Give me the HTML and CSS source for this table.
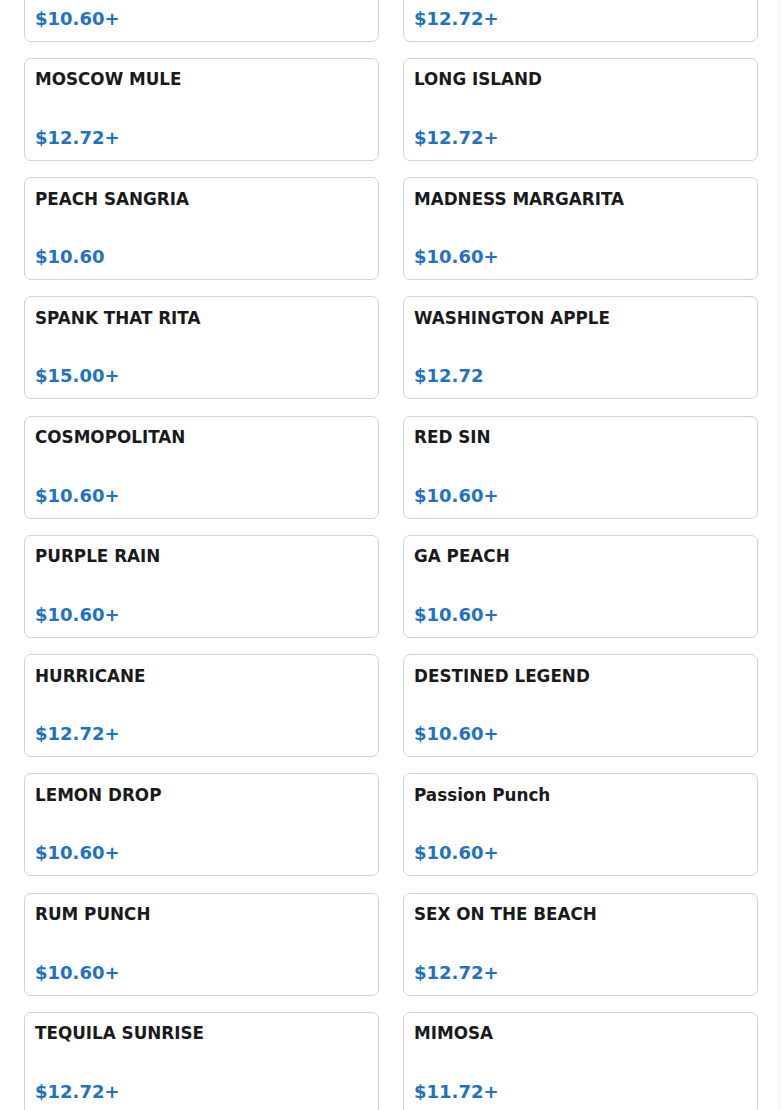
FILE: index.html
```html
<!DOCTYPE html>
<html lang="en">
<head>
<meta charset="utf-8">
<title>Drinks</title>
<link rel="stylesheet" href="styles.css">
</head>
<body>
<div class="page">
  <main class="main">
    <div class="grid">
      <div class="card"><h3 class="name">MARGARITA</h3><div class="price">$10.60+</div></div>
      <div class="card"><h3 class="name">PINA COLADA</h3><div class="price">$12.72+</div></div>
      <div class="card"><h3 class="name">MOSCOW MULE</h3><div class="price">$12.72+</div></div>
      <div class="card"><h3 class="name">LONG ISLAND</h3><div class="price">$12.72+</div></div>
      <div class="card"><h3 class="name">PEACH SANGRIA</h3><div class="price">$10.60</div></div>
      <div class="card"><h3 class="name">MADNESS MARGARITA</h3><div class="price">$10.60+</div></div>
      <div class="card"><h3 class="name">SPANK THAT RITA</h3><div class="price">$15.00+</div></div>
      <div class="card"><h3 class="name">WASHINGTON APPLE</h3><div class="price">$12.72</div></div>
      <div class="card"><h3 class="name">COSMOPOLITAN</h3><div class="price">$10.60+</div></div>
      <div class="card"><h3 class="name">RED SIN</h3><div class="price">$10.60+</div></div>
      <div class="card"><h3 class="name">PURPLE RAIN</h3><div class="price">$10.60+</div></div>
      <div class="card"><h3 class="name">GA PEACH</h3><div class="price">$10.60+</div></div>
      <div class="card"><h3 class="name">HURRICANE</h3><div class="price">$12.72+</div></div>
      <div class="card"><h3 class="name">DESTINED LEGEND</h3><div class="price">$10.60+</div></div>
      <div class="card"><h3 class="name">LEMON DROP</h3><div class="price">$10.60+</div></div>
      <div class="card"><h3 class="name">Passion Punch</h3><div class="price">$10.60+</div></div>
      <div class="card"><h3 class="name">RUM PUNCH</h3><div class="price">$10.60+</div></div>
      <div class="card"><h3 class="name">SEX ON THE BEACH</h3><div class="price">$12.72+</div></div>
      <div class="card"><h3 class="name">TEQUILA SUNRISE</h3><div class="price">$12.72+</div></div>
      <div class="card"><h3 class="name">MIMOSA</h3><div class="price">$11.72+</div></div>
    </div>
  </main>
  <div class="edge"></div>
</div>
</body>
</html>
```
FILE: styles.css
```css
html, body {
  margin: 0;
  padding: 0;
  background: #ffffff;
}
body {
  font-family: "DejaVu Sans", "Liberation Sans", sans-serif;
  color: #1a1a1d;
  overflow: hidden;
  height: 1110px;
}
.page {
  display: flex;
  min-height: 1110px;
}
.main {
  flex: 1;
  padding: 0 21px 0 24px;
}
.edge {
  width: 2px;
  border-left: 1px solid #eeeeee;
}
.grid {
  display: grid;
  grid-template-columns: 1fr 1fr;
  column-gap: 24px;
  row-gap: 16.25px;
  margin-top: -61.5px;
}
.card {
  border: 1px solid #d2d2d4;
  border-radius: 7px;
  padding: 10.5px 10px 12px;
  height: 103px;
  box-sizing: border-box;
  display: flex;
  flex-direction: column;
  background: #fff;
}
.name {
  margin: 0;
  font-size: 16.8px;
  line-height: 20px;
  font-weight: bold;
  color: #1a1a1d;
}
.price {
  margin-top: auto;
  font-size: 18px;
  line-height: 21px;
  font-weight: bold;
  color: #2272c3;
}
```
